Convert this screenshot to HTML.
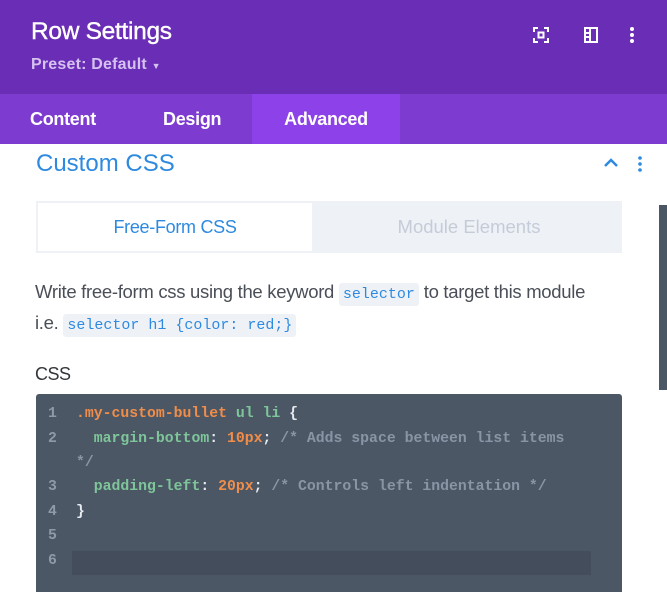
<!DOCTYPE html>
<html><head><style>
*{margin:0;padding:0;box-sizing:border-box}
body{width:667px;height:592px;overflow:hidden;background:#fff;font-family:"Liberation Sans",sans-serif;position:relative}
.hdr{position:absolute;left:0;top:0;width:667px;height:94px;background:#6a2db5}
.t1{position:absolute;left:31px;top:18px;color:#fff;font-size:24.5px;letter-spacing:-0.3px;-webkit-text-stroke:0.4px #fff}
.t2{position:absolute;left:31px;top:56px;color:#d5c2f0;font-size:16px;font-weight:bold;letter-spacing:0.2px}
.tabs{position:absolute;left:0;top:94px;width:667px;height:50px;background:#7e3bd0}
.tab{position:absolute;top:0;height:50px;line-height:50px;color:#fff;font-size:18px;font-weight:bold;letter-spacing:-0.3px}
.act{background:#8d41e8;left:252px;width:148px;text-align:center}
.cc{position:absolute;left:36px;top:150px;color:#2e8ae0;font-size:24px}
.sw{position:absolute;left:36px;top:201px;width:586px;height:52px;background:#eef2f7}
.sw1{position:absolute;left:0;top:0;width:278px;height:52px;background:#fff;border:2px solid #eef2f7;text-align:center;line-height:48px;color:#2e8ae0;font-size:18px;letter-spacing:-0.3px}
.sw2{position:absolute;left:280px;top:0;width:306px;height:52px;text-align:center;line-height:52px;color:#c5ccd8;font-size:18.5px;letter-spacing:0px}
.p{position:absolute;left:35px;top:278px;width:600px;color:#4a4f57;font-size:18.5px;line-height:28px;letter-spacing:-0.3px}
code{font-family:"Liberation Mono",monospace;font-size:15px;color:#2e8ae0;background:#eef2f7;border-radius:3px;padding:3px 4px;letter-spacing:0}
.lbl{position:absolute;left:35px;top:364px;font-size:18px;color:#32373c;letter-spacing:-0.5px}
.code{position:absolute;left:36px;top:394px;width:586px;height:198px;background:#4c5766;border-radius:3px 3px 0 0;font-family:"Liberation Mono",monospace;font-size:14.8px;font-weight:bold}
.ln{position:absolute;left:12px;color:#8f9aa8;width:10px}
.l{position:absolute;left:40px;white-space:pre;color:#e6ebf0}
.o{color:#f08d49}.g{color:#7ec699}.c{color:#8995a5}
.hl{position:absolute;left:36px;top:157px;width:519px;height:24px;background:#434d5b}
.sb{position:absolute;left:659px;top:205px;width:8px;height:185px;background:#4c5766}
</style></head><body>
<div class="hdr">
<div class="t1">Row Settings</div>
<div class="t2">Preset: Default <span style="font-size:9px">▼</span></div>
<svg style="position:absolute;left:533px;top:27px" width="16" height="16" viewBox="0 0 16 16" fill="none" stroke="#fff" stroke-width="2"><path d="M1 5V1h4M11 1h4v4M15 11v4h-4M5 15H1v-4"/><rect x="5.5" y="5.5" width="5" height="5"/></svg>
<svg style="position:absolute;left:584px;top:27px" width="14" height="16" viewBox="0 0 14 16" fill="none" stroke="#fff" stroke-width="2"><rect x="1" y="1" width="12" height="14"/><path d="M6 1v14M1 6h5M1 10h5"/></svg>
<svg style="position:absolute;left:629px;top:27px" width="6" height="16"><circle cx="3" cy="2" r="2" fill="#fff"/><circle cx="3" cy="8" r="2" fill="#fff"/><circle cx="3" cy="14" r="2" fill="#fff"/></svg>
</div>
<div class="tabs">
<div class="tab" style="left:30px">Content</div>
<div class="tab" style="left:163px">Design</div>
<div class="tab act">Advanced</div>
</div>
<div class="cc">Custom CSS</div>
<svg style="position:absolute;left:604px;top:158px" width="14" height="10" viewBox="0 0 14 10" fill="none" stroke="#2e8ae0" stroke-width="2.5"><path d="M1 8l6-6 6 6"/></svg>
<svg style="position:absolute;left:637px;top:156px" width="6" height="16"><circle cx="3" cy="2" r="1.8" fill="#2e8ae0"/><circle cx="3" cy="8" r="1.8" fill="#2e8ae0"/><circle cx="3" cy="14" r="1.8" fill="#2e8ae0"/></svg>
<div class="sw"><div class="sw1">Free-Form CSS</div><div class="sw2">Module Elements</div></div>
<div class="p">Write free-form css using the keyword <code>selector</code> to target this module<br>i.e. <code>selector h1 {color: red;}</code></div>
<div class="lbl">CSS</div>
<div class="code">
<div class="hl"></div>
<div class="ln" style="top:12px">1</div><div class="l" style="top:12px"><span class="o">.my-custom-bullet</span> <span class="g">ul li</span> {</div>
<div class="ln" style="top:37px">2</div><div class="l" style="top:37px">  <span class="g">margin-bottom</span>: <span class="o">10px</span>; <span class="c">/* Adds space between list items</span></div>
<div class="l" style="top:61px"><span class="c">*/</span></div>
<div class="ln" style="top:85px">3</div><div class="l" style="top:85px">  <span class="g">padding-left</span>: <span class="o">20px</span>; <span class="c">/* Controls left indentation */</span></div>
<div class="ln" style="top:110px">4</div><div class="l" style="top:110px">}</div>
<div class="ln" style="top:134px">5</div>
<div class="ln" style="top:159px">6</div>
</div>
<div class="sb"></div>
</body></html>
